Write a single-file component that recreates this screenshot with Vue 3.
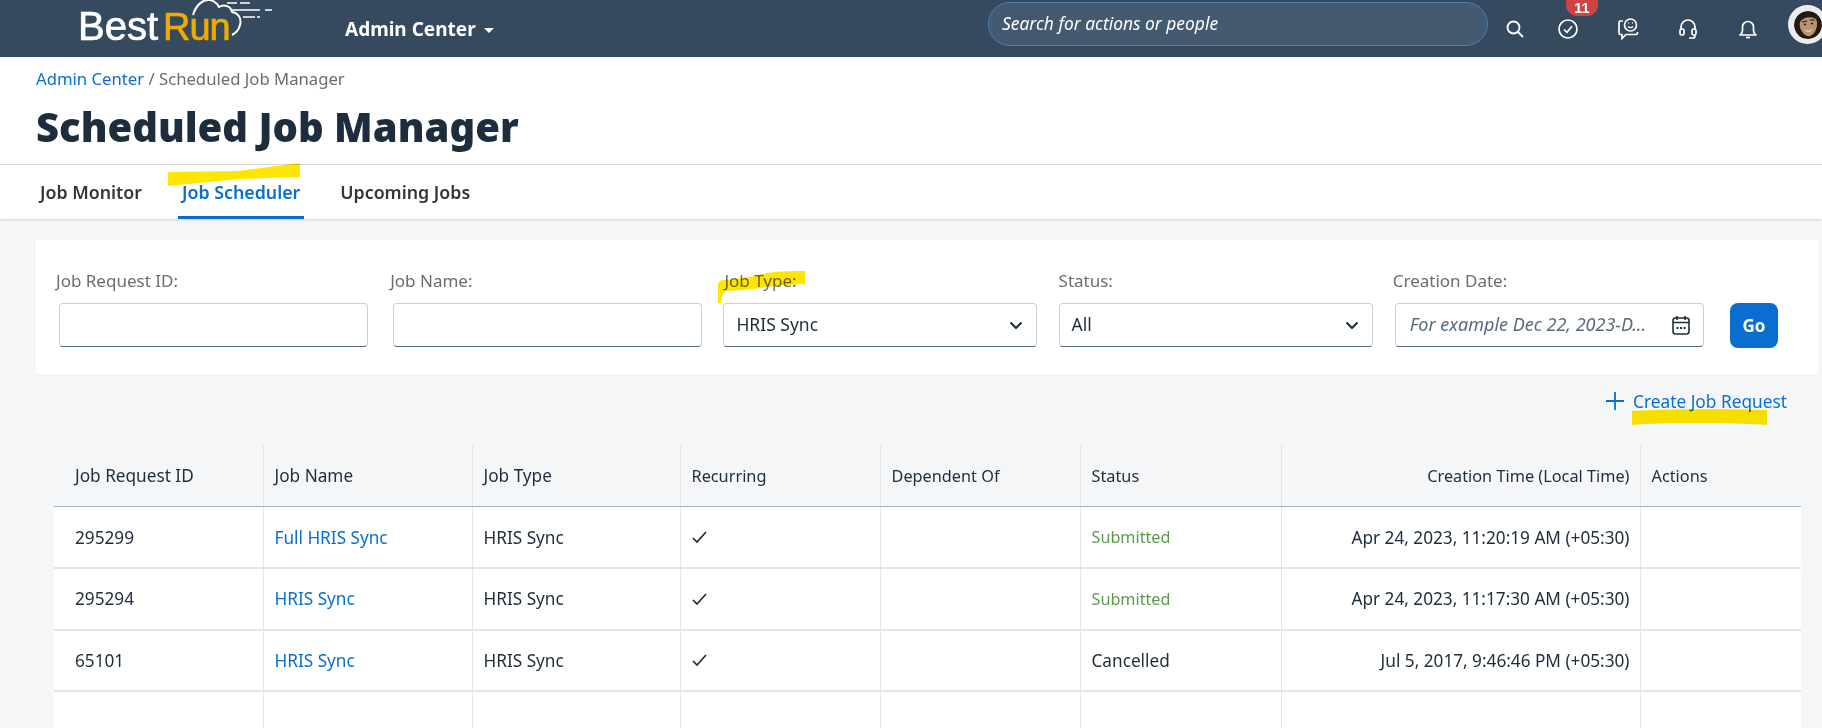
<template>
  <div class="page">
    <header class="shell_bar">
      <div class="logo">
        <span class="logo_best">Best</span><span class="logo_run">Run</span>
        <svg class="logo_cloud" width="82" height="44" viewBox="0 0 82 44" fill="none" stroke="#fff">
          <path d="M3 21C6 11 13 5 20 6c5 1 7 3 9 7 5-3 12-1 13 5 6 1 10 6 8 13-1 4-4 8-8 10" stroke-width="2"/>
          <path d="M37 9h10M50 9h10M40 16h30M75 16h7M53 23h12M67 23h3" stroke-width="1.6"/>
        </svg>
      </div>
      <div class="module_name">Admin Center<i class="caret"></i></div>
      <div class="search_box">Search for actions or people</div>
      <button class="search_btn">
        <svg width="18" height="18" viewBox="0 0 18 18" fill="none" stroke="#fff" stroke-width="1.8"><circle cx="7.5" cy="7.5" r="6"/><path d="M12 12l5 5"/></svg>
      </button>
      <button class="icon_btn">
        <span class="badge">11</span>
        <svg width="22" height="22" viewBox="0 0 22 22" fill="none" stroke="#fff" stroke-width="1.7"><circle cx="11" cy="11" r="9"/><path d="M7 11.5l3 2.8 5-6"/></svg>
      </button>
      <button class="icon_btn">
        <svg width="24" height="24" viewBox="0 0 24 24" fill="none" stroke="#fff" stroke-width="1.7"><circle cx="14.5" cy="8" r="6"/><path d="M12 9.500c1.500 1.600 3.500 1.600 5 0" stroke-width="1.300"/><path d="M12 6h.8M16.200 6h.8" stroke-width="1.300"/><path d="M7 4H4.500C3.500 4 3 4.700 3 5.500V16c0 1 .7 1.500 1.500 1.500H6v4l4-4h10c1 0 1.500-.7 1.500-1.500v-1"/></svg>
      </button>
      <button class="icon_btn">
        <svg width="22" height="22" viewBox="0 0 22 22" fill="none" stroke="#fff" stroke-width="1.7"><path d="M4 12V9a7 7 0 0 1 14 0v3"/><rect x="3" y="11" width="4" height="6" rx="1.500"/><rect x="15" y="11" width="4" height="6" rx="1.500"/><path d="M18 17v1c0 1.500-1 2-2 2h-4"/></svg>
      </button>
      <button class="icon_btn">
        <svg width="22" height="22" viewBox="0 0 22 22" fill="none" stroke="#fff" stroke-width="1.7"><path d="M3 17c1.500-1 2.500-2.500 2.500-5V9a5.500 5.500 0 0 1 11 0v3c0 2.500 1 4 2.500 5z" stroke-linejoin="round"/><path d="M9 19.500h4" /></svg>
      </button>
      <div class="avatar">
        <svg width="28" height="28" viewBox="0 0 28 28">
          <circle cx="14" cy="14" r="14" fill="#241a15"/>
          <path d="M6 11c3-5 11-6 16-3 2 4 1 10-2 14-3 4-7 4-10 1-3-3-5-7-4-12z" fill="#b8946f"/>
          <path d="M8 11l5-1M16 9l5 0" stroke="#2a1a12" stroke-width="1.200"/>
          <path d="M10 13.500h2M17 12.500h2" stroke="#241a15" stroke-width="1.400"/>
          <path d="M10 18c3 2.500 6 2.200 9-.5-2 4-7 4.500-9 .5z" fill="#f1e6dc"/>
          <path d="M0 24c6 0 8 2 11 4H0zM28 22c-3 2-5 4-8 6h8z" fill="#241a15"/>
        </svg>
      </div>
    </header>

    <section class="page_head">
      <div class="breadcrumb"><a>Admin Center</a> / Scheduled Job Manager</div>
      <h1>Scheduled Job Manager</h1>
      <nav class="tabs">
        <div v-for="tab in tabs" :key="tab" class="tab" :class="{ active: tab === 'Job Scheduler' }">{{ tab }}</div>
      </nav>
    </section>

    <main class="content">
      <div class="filter_card">
        <div class="filter_item">
          <label>Job Request ID:</label>
          <div class="field f1"></div>
        </div>
        <div class="filter_item">
          <label>Job Name:</label>
          <div class="field f2"></div>
        </div>
        <div class="filter_item">
          <label>Job Type:</label>
          <div class="field f3">HRIS Sync<svg class="chevron" width="14" height="9" viewBox="0 0 14 9" fill="none" stroke="#1d2d3e" stroke-width="2"><path d="M1.500 1.500L7 7l5.500-5.500"/></svg></div>
        </div>
        <div class="filter_item">
          <label>Status:</label>
          <div class="field f4">All<svg class="chevron" width="14" height="9" viewBox="0 0 14 9" fill="none" stroke="#1d2d3e" stroke-width="2"><path d="M1.500 1.500L7 7l5.500-5.500"/></svg></div>
        </div>
        <div class="filter_item">
          <label>Creation Date:</label>
          <div class="field f5">
            <span class="placeholder">For example Dec 22, 2023-D...</span>
            <svg class="calendar" width="18" height="20" viewBox="0 0 18 20" fill="none" stroke="#1d2d3e" stroke-width="1.600"><rect x="1" y="3" width="16" height="16" rx="2.500"/><path d="M1 7.500h16M5 1v4M13 1v4"/><path d="M4.500 13h2M8 13h2M11.500 13h2" stroke-width="2"/></svg>
          </div>
        </div>
        <button class="go_btn">Go</button>
      </div>

      <div class="action_row">
        <a class="create_link">
          <svg width="18" height="18" viewBox="0 0 18 18" stroke="#0a6ed1" stroke-width="1.800"><path d="M9 0v18M0 9h18"/></svg>
          Create Job Request
        </a>
      </div>

      <table class="job_table">
        <thead>
          <tr>
            <th class="first wide">Job Request ID</th>
            <th class="wide">Job Name</th>
            <th class="wide">Job Type</th>
            <th>Recurring</th>
            <th>Dependent Of</th>
            <th>Status</th>
            <th class="time">Creation Time (Local Time)</th>
            <th>Actions</th>
          </tr>
        </thead>
        <tbody>
          <tr v-for="(job, index) in jobs" :key="index">
            <td class="first">{{ job.id }}</td>
            <td><a>{{ job.name }}</a></td>
            <td>{{ job.type }}</td>
            <td>
              <svg v-if="job.recurring" class="tick" width="16" height="12" viewBox="0 0 16 12" fill="none" stroke="#1d2d3e" stroke-width="1.700"><path d="M1 7l4 4 9-10"/></svg>
            </td>
            <td></td>
            <td :class="{ submitted: job.status === 'Submitted' }">{{ job.status }}</td>
            <td class="time">{{ job.time }}</td>
            <td></td>
          </tr>
        </tbody>
      </table>
    </main>

    <!-- marker strokes someone drew over the screen -->
    <svg class="marker" width="1822" height="728" viewBox="0 0 1822 728" fill="#ffe600">
      <path d="M168 172l70-1 62-8v14l-60 2-72 7z"/>
      <path d="M718 303v-17c0-4 2-6 6-6 14-1 30-3 43-7 13-2 26-2 38-2v13c-14 1-26 1-40 3-14 3-26 3-38 4-4 0-5 4-6 12z"/>
      <path d="M1632 411c40-2 90-2 135-1v15c-30-2-100-3-135 0z"/>
    </svg>
  </div>
</template>

<script setup>
const tabs = ['Job Monitor', 'Job Scheduler', 'Upcoming Jobs']

const jobs = [
  { id: '295299', name: 'Full HRIS Sync', type: 'HRIS Sync', recurring: true, status: 'Submitted', time: 'Apr 24, 2023, 11:20:19 AM (+05:30)' },
  { id: '295294', name: 'HRIS Sync', type: 'HRIS Sync', recurring: true, status: 'Submitted', time: 'Apr 24, 2023, 11:17:30 AM (+05:30)' },
  { id: '65101', name: 'HRIS Sync', type: 'HRIS Sync', recurring: true, status: 'Cancelled', time: 'Jul 5, 2017, 9:46:46 PM (+05:30)' },
  { id: '', name: '', type: '', recurring: false, status: '', time: '' },
]
</script>

<style>
html, body {
  margin: 0;
  overflow: hidden;
}
</style>

<style scoped>
.page {
  position: relative;
  width: 1822px;
  height: 728px;
  overflow: hidden;
  background: #f5f6f7;
  font-family: "Noto Sans", "Liberation Sans", sans-serif;
  font-size: 17px;
  color: #1d2d3e;
}
.shell_bar {
  display: flex;
  align-items: center;
  height: 57px;
  background: #354a5f;
  color: #fff;
}
.shell_bar > * {
  flex: none;
}
.logo {
  position: relative;
  width: 267px;
  margin-left: 78px;
  font-family: "Liberation Sans", sans-serif;
  line-height: 44px;
  box-sizing: border-box;
  padding-top: 4px;
  -webkit-text-stroke: 0.7px currentColor;
}
.logo_best {
  font-size: 40px;
}
.logo_run {
  font-size: 38px;
  letter-spacing: -1px;
  color: #f0ab00;
  margin-left: 5px;
}
.logo_cloud {
  position: absolute;
  left: 112px;
  top: -6px;
}
.module_name {
  width: 643px;
  font-size: 19px;
  font-weight: 700;
  white-space: nowrap;
}
.caret {
  display: inline-block;
  margin-left: 8px;
  border-left: 5.500px solid transparent;
  border-right: 5.500px solid transparent;
  border-top: 5.500px solid #fff;
  vertical-align: 3px;
}
.search_box {
  box-sizing: border-box;
  width: 500px;
  height: 44px;
  padding-left: 13px;
  margin-top: -9px;
  line-height: 41px;
  background: #435a71;
  border: 1.500px solid #4c7fb5;
  border-radius: 22px;
  font-style: italic;
  font-size: 17.400px;
}
.search_btn, .icon_btn {
  background: none;
  border: 0;
  padding: 0;
  display: flex;
  align-items: center;
  justify-content: center;
  position: relative;
  height: 57px;
}
.search_btn {
  width: 24px;
  margin: 0 11px 0 15px;
}
.icon_btn {
  width: 60px;
}
.badge {
  position: absolute;
  left: 28px;
  top: 0;
  width: 32px;
  height: 16px;
  line-height: 16.200px;
  border-radius: 0 0 11px 11px;
  background: #d04343;
  color: #fff;
  font-family: "Liberation Sans", sans-serif;
  font-size: 14.500px;
  font-weight: 700;
}
.avatar {
  box-sizing: border-box;
  width: 39px;
  height: 39px;
  margin: -8px 0 0 10px;
  border-radius: 50%;
  background: #ececec;
  padding: 6px 0 0 6px;
}
.avatar svg {
  display: block;
  border-radius: 50%;
}
.page_head {
  background: #fff;
  box-shadow: 0 1px 3px rgba(0, 0, 0, 0.15);
}
.breadcrumb {
  padding: 11px 0 0 36px;
  line-height: 22px;
  font-size: 16.700px;
  color: #6a6d70;
}
.breadcrumb a {
  color: #0a6ed1;
}
h1 {
  margin: 0;
  padding: 14px 0 0 36px;
  height: 74px;
  box-sizing: border-box;
  font-size: 40px;
  line-height: 46px;
  font-weight: 900;
  color: #1d2d3e;
}
.tabs {
  display: flex;
  gap: 32px;
  height: 55px;
  padding-left: 36px;
  border-top: 1px solid #d9d9d9;
  box-sizing: border-box;
}
.tab {
  padding: 0 4px;
  line-height: 55px;
  font-size: 17.800px;
  font-weight: 600;
  color: #32363a;
}
.tab.active {
  color: #0a6ed1;
  border-bottom: 3px solid #0a6ed1;
  box-sizing: border-box;
}
.content {
  padding: 21px 4px 0 36px;
}
.filter_card {
  display: flex;
  box-sizing: border-box;
  height: 134px;
  padding: 30px 0 0 20px;
  background: #fff;
}
.filter_item {
  width: 334.200px;
  flex: none;
}
.filter_item label {
  display: block;
  height: 22px;
  margin-bottom: 11px;
  line-height: 22px;
  color: #6a6d70;
}
.field {
  position: relative;
  box-sizing: border-box;
  height: 44px;
  padding-left: 12px;
  line-height: 41px;
  font-size: 17.500px;
  white-space: nowrap;
  background: #fff;
  border: 1px solid #c9d0d7;
  border-bottom: 1.500px solid #556b82;
  border-radius: 4px;
}
.f1 { width: 309px; margin-left: 3px; }
.f2 { width: 309px; margin-left: 3px; }
.f3 { width: 314px; margin-left: -1px; }
.f4 { width: 314px; }
.f5 { width: 309px; margin-left: 2px; padding-left: 14px; }
.chevron {
  position: absolute;
  right: 13px;
  top: 17px;
}
.placeholder {
  font-style: italic;
  font-size: 18px;
  color: #556b82;
}
.calendar {
  position: absolute;
  right: 13px;
  top: 11px;
}
.go_btn {
  width: 48px;
  height: 45px;
  margin: 33px 0 0 3px;
  border: 0;
  border-radius: 8px;
  background: #0a6ed1;
  color: #fff;
  font-family: inherit;
  font-size: 17px;
  font-weight: 700;
}
.action_row {
  display: flex;
  justify-content: flex-end;
  height: 71px;
  padding: 15px 31px 0 0;
  box-sizing: border-box;
}
.create_link {
  display: flex;
  align-items: center;
  gap: 9px;
  height: 24px;
  color: #0a6ed1;
  font-size: 17.300px;
}
.job_table {
  width: 1747px;
  margin-left: 18px;
  border-collapse: collapse;
  table-layout: fixed;
  background: #fff;
}
.job_table th, .job_table td {
  box-sizing: border-box;
  padding: 0 0 0 11px;
  height: 61.500px;
  text-align: left;
  border-right: 1px solid #e5e5e5;
  white-space: nowrap;
}
.job_table th {
  font-size: 16.300px;
  font-weight: 400;
  background: #f5f6f7;
  border-bottom: 1px solid #a8b3bd;
}
.job_table th.wide {
  font-size: 17.200px;
}
.job_table td {
  font-size: 17.200px;
  border-bottom: 2px solid #e5e5e5;
}
.job_table th:nth-child(1) { width: 209px; }
.job_table th:nth-child(2) { width: 209px; }
.job_table th:nth-child(3) { width: 208px; }
.job_table th:nth-child(4) { width: 200px; }
.job_table th:nth-child(5) { width: 200px; }
.job_table th:nth-child(6) { width: 201px; }
.job_table th:nth-child(7) { width: 359px; }
.job_table th:nth-child(8) { width: 161px; }
.job_table .first {
  padding-left: 21px;
}
.job_table .time {
  padding: 0 10px 0 0;
  text-align: right;
}
.job_table tr > :last-child {
  border-right: 0;
}
.job_table a {
  color: #0a6ed1;
}
.job_table .submitted {
  color: #5b9a4b;
  font-size: 16.200px;
}
.tick {
  display: block;
}
.marker {
  position: absolute;
  left: 0;
  top: 0;
  mix-blend-mode: multiply;
  pointer-events: none;
}
</style>
